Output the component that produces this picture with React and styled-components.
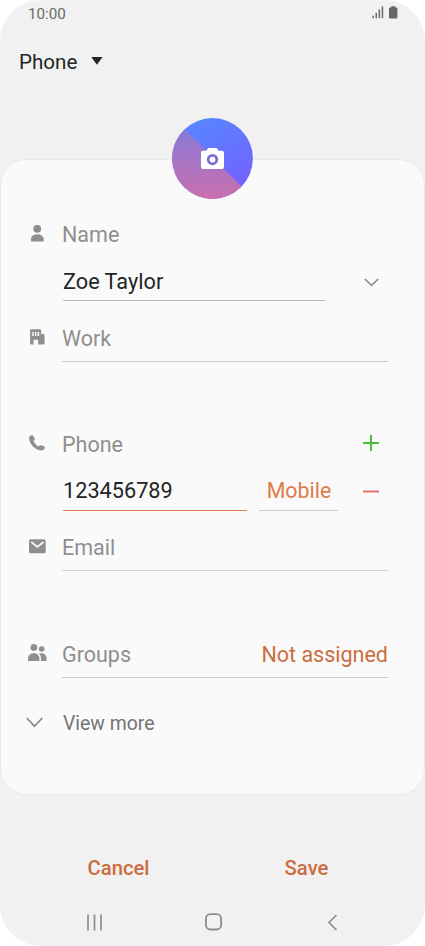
import React from 'react';
import styled, { createGlobalStyle } from 'styled-components';

const GlobalStyle = createGlobalStyle`
  * {
    box-sizing: border-box;
  }

  body {
    margin: 0;
    background: #ffffff;
    font-family: Roboto, sans-serif;
  }
`;

const Screen = styled.div`
  display: flex;
  flex-direction: column;
  width: 425px;
  height: 946px;
  overflow: hidden;
  background: #f1f1f1;
  border-radius: 41px;
`;

const StatusBar = styled.div`
  display: flex;
  justify-content: space-between;
  height: 26px;
  padding: 4px 27px 0 28px;
  color: #6a6a6a;
  font-size: 15.2px;
  line-height: 20px;
`;

const StatusIcons = styled.div`
  display: flex;
  gap: 5px;
  padding-top: 2px;
`;

const AccountPicker = styled.div`
  display: flex;
  align-items: center;
  gap: 14px;
  height: 133px;
  padding: 0 19px 61px;
  color: #252525;
  font-size: 20.6px;

  svg {
    margin-bottom: 2px;
  }
`;

const Card = styled.div`
  height: 636px;
  padding: 0 36px 0 25px;
  background: #fafafa;
  border: 1px solid #e9e9e9;
  border-radius: 26px;
`;

const Avatar = styled.div`
  width: 81px;
  height: 81px;
  margin: -42px 0 20px 146px;
`;

const Field = styled.div`
  display: flex;
  height: ${(props) => props.height}px;
`;

const IconSlot = styled.div`
  flex: none;
  width: 36px;
  padding-top: ${(props) => props.top || 0}px;

  svg {
    display: block;
    margin-left: ${(props) => props.left || 0}px;
  }
`;

const FieldBody = styled.div`
  display: flex;
  flex: 1;
  justify-content: space-between;
  height: ${(props) => (props.line ? '39px' : '30px')};
  border-bottom: ${(props) => (props.line ? `1px solid ${props.line}` : 'none')};
`;

const Label = styled.span`
  color: #8f8f8f;
  font-size: 21.5px;
  line-height: 32px;
`;

const Entry = styled.div`
  display: flex;
  height: ${(props) => props.height}px;
  padding-left: 37px;
`;

const Value = styled.div`
  width: ${(props) => props.width}px;
  height: ${(props) => (props.active ? 35 : 34)}px;
  border-bottom: ${(props) => (props.active ? '1.5px solid #df7a47' : '1px solid #bcbcbc')};
  color: #252525;
  font-size: 21.7px;
  line-height: 30px;
  white-space: nowrap;
`;

const TypePicker = styled.div`
  width: 79px;
  height: 35px;
  margin-left: 12px;
  padding-left: 1px;
  border-bottom: 1px solid #cccccc;
  color: #e07b49;
  font-size: 21.4px;
  line-height: 30px;
  text-align: center;
`;

const EntryAction = styled.div`
  flex: 1;
  padding: ${(props) => props.top}px 9px 0 0;

  svg {
    display: block;
    margin-left: auto;
  }
`;

const GroupValue = styled.span`
  color: #cc6d3f;
  font-size: 21.5px;
  line-height: 32px;
`;

const MoreLabel = styled.span`
  color: #747474;
  font-size: 19.4px;
  line-height: 31px;
  padding-left: 1px;
`;

const Actions = styled.div`
  display: flex;
  height: 106px;
  padding: 58px 12px 0;
`;

const ActionButton = styled.button`
  flex: none;
  width: 200px;
  height: 30px;
  padding: 0 ${(props) => props.right || 0}px 0 ${(props) => props.left || 0}px;
  border: 0;
  background: none;
  color: #cc6d3f;
  font-family: inherit;
  font-size: 20.3px;
  font-weight: 500;
  line-height: 30px;
`;

const NavBar = styled.div`
  display: flex;
  align-items: center;
  justify-content: space-between;
  height: 42px;
  padding: 0 87px 0 86px;
`;

const SignalIcon = () => (
  <svg width="12" height="13" viewBox="0 0 12 13" fill="#6a6a6a">
    <rect x="0.4" y="9.6" width="1.5" height="2.6" />
    <rect x="3.5" y="6.8" width="1.5" height="5.4" />
    <rect x="6.6" y="3.6" width="1.5" height="8.6" />
    <rect x="9.7" y="0.4" width="1.5" height="11.8" />
  </svg>
);

const BatteryIcon = () => (
  <svg width="9" height="13" viewBox="0 0 9 13" fill="#666666">
    <path d="M2.2 0.2h4v1.3h1.2q1 0 1 1v9q0 1-1 1H1q-1 0-1-1v-9q0-1 1-1h1.2z" />
  </svg>
);

const CaretIcon = () => (
  <svg width="12" height="8" viewBox="0 0 12 8" fill="#252525">
    <path d="M0.3 0h11.2L5.9 7.7z" />
  </svg>
);

const AvatarArt = () => (
  <svg width="81" height="81" viewBox="0 0 81 81">
    <defs>
      <linearGradient id="avatarBlue" x1="0.2" y1="0" x2="0.8" y2="1">
        <stop offset="0" stopColor="#5588ff" />
        <stop offset="1" stopColor="#775dff" />
      </linearGradient>
      <linearGradient id="avatarPink" x1="0" y1="0" x2="0" y2="1">
        <stop offset="0" stopColor="#7f7be0" />
        <stop offset="1" stopColor="#ca6fac" />
      </linearGradient>
      <clipPath id="avatarClip">
        <circle cx="40.5" cy="40.5" r="40.4" />
      </clipPath>
    </defs>
    <g clipPath="url(#avatarClip)">
      <rect width="81" height="81" fill="url(#avatarBlue)" />
      <path d="M0 -1.2L82.2 81H0z" fill="url(#avatarPink)" />
    </g>
    <path
      d="M36.7 30h7.6q.6 0 .9.5l1.4 2.3h3.4q2 0 2 2v14.3q0 2-2 2H31q-2 0-2-2V34.8q0-2 2-2h3.4l1.400-2.300q.3-.5.9-.5z"
      fill="#ffffff"
    />
    <circle cx="40.5" cy="41.6" r="4.3" fill="none" stroke="#7c6fd4" strokeWidth="2.7" />
  </svg>
);

const PersonIcon = () => (
  <svg width="13" height="17" viewBox="0 0 13 17" fill="#8f8f8f">
    <circle cx="6.2" cy="3.8" r="3.9" />
    <path d="M-.2 16.4v-2C-.2 11.200 2.800 9.200 6.200 9.200S12.700 11.200 12.700 14.400v2z" />
  </svg>
);

const WorkIcon = () => (
  <svg width="15" height="16" viewBox="0 0 15 16">
    <path
      d="M1 .2h9.200q.9 0 .9.900v3.900h2q1.500 0 1.500 1.500v7.600q0 1.400-1.400 1.400H8.200v-4.700H3.500v4.700H1.300Q.1 15.500.1 14.300V1.100Q.1.200 1 .2z"
      fill="#8f8f8f"
    />
    <path d="M3 3.100v3.800M5.700 3.100v3.800M8.400 3.100v3.800" stroke="#fafafa" strokeWidth="1.500" />
  </svg>
);

const PhoneIcon = () => (
  <svg width="16" height="16" viewBox="0 0 16 16" fill="#8f8f8f">
    <path d="M.5 1.600L2.800.1q.6-.3 1 .3l2 3.100q.3.500-.1 1L4.500 6c.9 2.200 2.600 4.200 4.900 5.500l1.700-1.200q.5-.3 1 0l3.300 1.300q.6.300.4.900c-.4 1.800-1.700 3-3.600 3C6.300 15.500.2 9.200.1 3.100q0-1 .4-1.500z" />
  </svg>
);

const MailIcon = () => (
  <svg width="17" height="15" viewBox="0 0 17 15">
    <rect x="0" y="0.3" width="16.7" height="14" rx="1.6" fill="#8f8f8f" />
    <path d="M2.3 3l6.100 4.800L14.500 3" fill="none" stroke="#fafafa" strokeWidth="1.7" />
  </svg>
);

const GroupIcon = () => (
  <svg width="19" height="18" viewBox="0 0 19 18" fill="#8f8f8f">
    <circle cx="5.9" cy="3.4" r="3.4" />
    <circle cx="13.7" cy="5" r="2.8" />
    <path d="M0 17v-2.600c0-3.200 2.500-5.200 5.700-5.200s5.700 2 5.700 5.200V17z" />
    <path d="M12.900 17v-2.700c0-2-.7-3.800-1.800-4.900 3.900-.9 7.500 1.100 7.500 4.900V17z" />
  </svg>
);

const Chevron = ({ width, height, color }) => (
  <svg width={width} height={height} viewBox={`0 0 ${width} ${height}`} fill="none">
    <path
      d={`M0.8 1L${width / 2} ${height - 1.7}L${width - 0.8} 1`}
      stroke={color}
      strokeWidth="1.7"
    />
  </svg>
);

const PlusIcon = () => (
  <svg width="16" height="16" viewBox="0 0 16 16">
    <path d="M8 0v16M0 8h16" stroke="#4dbb3c" strokeWidth="2" />
  </svg>
);

const MinusIcon = () => (
  <svg width="16" height="3" viewBox="0 0 16 3">
    <path d="M0 1.5h16" stroke="#e8706c" strokeWidth="2" />
  </svg>
);

const RecentsIcon = () => (
  <svg width="17" height="17" viewBox="0 0 17 17">
    <path d="M2 .5v16M8.500 .5v16M15 .5v16" stroke="#8d8d8d" strokeWidth="1.7" />
  </svg>
);

const HomeIcon = () => (
  <svg width="20" height="18" viewBox="0 0 20 18">
    <rect x="0.9" y="1.1" width="15.2" height="15.4" rx="4.5" fill="none" stroke="#8d8d8d" strokeWidth="1.8" />
  </svg>
);

const BackIcon = () => (
  <svg width="11" height="17" viewBox="0 0 11 17">
    <path d="M9.5 1L2 8.500L9.5 16" fill="none" stroke="#8d8d8d" strokeWidth="1.7" />
  </svg>
);

const App = () => (
  <>
    <GlobalStyle />
    <Screen>
      <StatusBar>
        <span>10:00</span>
        <StatusIcons>
          <SignalIcon />
          <BatteryIcon />
        </StatusIcons>
      </StatusBar>
      <AccountPicker>
        <span>Phone</span>
        <CaretIcon />
      </AccountPicker>

      <Card>
        <Avatar><AvatarArt /></Avatar>

        <Field height={48}>
          <IconSlot top={6} left={5}><PersonIcon /></IconSlot>
          <FieldBody><Label>Name</Label></FieldBody>
        </Field>
        <Entry height={56}>
          <Value width={262}>Zoe Taylor</Value>
          <EntryAction top={11}><Chevron width={15} height={9} color="#8f8f8f" /></EntryAction>
        </Entry>
        <Field height={106}>
          <IconSlot top={6} left={4}><WorkIcon /></IconSlot>
          <FieldBody line="#cccccc"><Label>Work</Label></FieldBody>
        </Field>

        <Field height={47}>
          <IconSlot top={6} left={3}><PhoneIcon /></IconSlot>
          <FieldBody>
            <Label>Phone</Label>
            <EntryAction top={6}><PlusIcon /></EntryAction>
          </FieldBody>
        </Field>
        <Entry height={56}>
          <Value width={184} active>123456789</Value>
          <TypePicker>Mobile</TypePicker>
          <EntryAction top={14}><MinusIcon /></EntryAction>
        </Entry>
        <Field height={107}>
          <IconSlot top={7} left={3}><MailIcon /></IconSlot>
          <FieldBody line="#d4d4d4"><Label>Email</Label></FieldBody>
        </Field>

        <Field height={69}>
          <IconSlot top={5} left={2}><GroupIcon /></IconSlot>
          <FieldBody line="#cccccc">
            <Label>Groups</Label>
            <GroupValue>Not assigned</GroupValue>
          </FieldBody>
        </Field>
        <Field height={30}>
          <IconSlot top={9} left={0}><Chevron width={17} height={11} color="#858585" /></IconSlot>
          <MoreLabel>View more</MoreLabel>
        </Field>
      </Card>

      <Actions>
        <ActionButton left={13}>Cancel</ActionButton>
        <ActionButton right={11}>Save</ActionButton>
      </Actions>
      <NavBar>
        <RecentsIcon />
        <HomeIcon />
        <BackIcon />
      </NavBar>
    </Screen>
  </>
);

export default App;
